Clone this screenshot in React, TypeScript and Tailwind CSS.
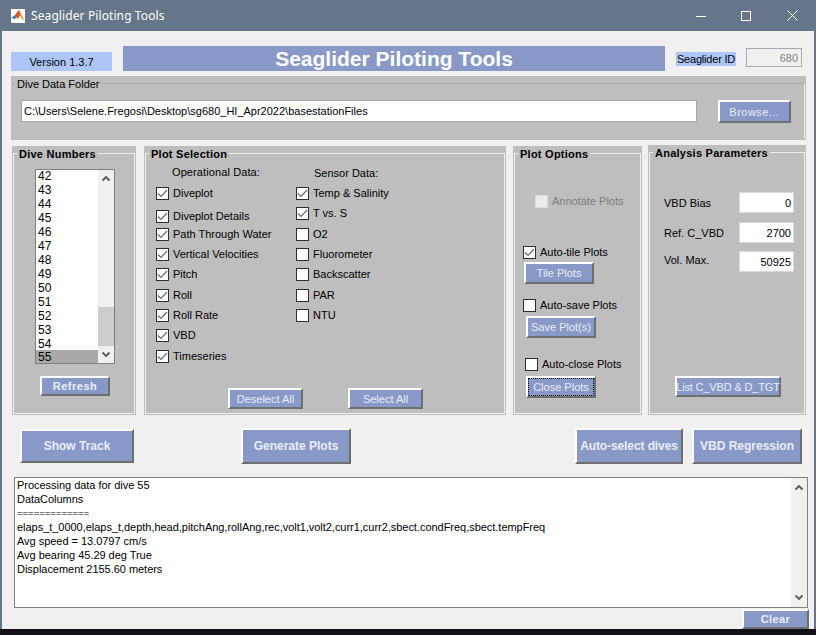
import type { ReactNode } from "react";

const diveNumbers = [42, 43, 44, 45, 46, 47, 48, 49, 50, 51, 52, 53, 54, 55];

const logLines = [
  "Processing data for dive 55",
  "DataColumns",
  "=============",
  "elaps_t_0000,elaps_t,depth,head,pitchAng,rollAng,rec,volt1,volt2,curr1,curr2,sbect.condFreq,sbect.tempFreq",
  "Avg speed = 13.0797 cm/s",
  "Avg bearing 45.29 deg True",
  "Displacement 2155.60 meters",
];

const operational = [
  { label: "Diveplot", row: "h-[23px]" },
  { label: "Diveplot Details", row: "h-[18px]" },
  { label: "Path Through Water", row: "h-[20px]" },
  { label: "Vertical Velocities", row: "h-[20px]" },
  { label: "Pitch", row: "h-[21px]" },
  { label: "Roll", row: "h-[20px]" },
  { label: "Roll Rate", row: "h-[20px]" },
  { label: "VBD", row: "h-[21px]" },
  { label: "Timeseries", row: "h-[14px]" },
];

const sensors = [
  { label: "Temp & Salinity", checked: true, row: "h-[20px]" },
  { label: "T vs. S", checked: true, row: "h-[21px]" },
  { label: "O2", checked: false, row: "h-[20px]" },
  { label: "Fluorometer", checked: false, row: "h-[20px]" },
  { label: "Backscatter", checked: false, row: "h-[21px]" },
  { label: "PAR", checked: false, row: "h-[20px]" },
  { label: "NTU", checked: false, row: "h-[14px]" },
];

function Btn({ children, className = "" }: { children: ReactNode; className?: string }) {
  return (
    <div
      className={
        "flex shrink-0 items-center justify-center border-2 border-t-white border-l-white border-r-[#6e6e6e] border-b-[#6e6e6e] bg-[#8899c8] text-[#e9eef8] " +
        className
      }
    >
      {children}
    </div>
  );
}

function Check({ label, checked = false, disabled = false }: { label: string; checked?: boolean; disabled?: boolean }) {
  return (
    <div className={"flex h-[14px] items-center " + (disabled ? "text-[#7d7d7d]" : "text-black")}>
      <div
        className={
          "flex h-[13px] w-[13px] shrink-0 items-center justify-center border " +
          (disabled ? "border-[#dcdcdc] bg-[#ececec]" : "border-[#2e2e2e] bg-white")
        }
      >
        {checked && (
          <svg width="11" height="11" viewBox="0 0 11 11" fill="none">
            <path d="M1 5.5 L4 8.5 L10 2" stroke="#6a6a6a" strokeWidth="1.2" />
          </svg>
        )}
      </div>
      <span className="ml-[4px] whitespace-nowrap">{label}</span>
    </div>
  );
}

function Panel({
  title,
  className = "",
  frame = "border-[#efefef]",
  bold = true,
  children,
}: {
  title: string;
  className?: string;
  frame?: string;
  bold?: boolean;
  children: ReactNode;
}) {
  return (
    <div className={"relative shrink-0 bg-[#bebebe] " + className}>
      <div className={"pointer-events-none absolute inset-x-[1px] top-[7px] bottom-[1px] border " + frame} />
      <div
        className={
          "absolute top-[1px] bg-[#bebebe] px-[2px] leading-[14px] text-black " +
          (bold ? "left-[5px] font-bold tracking-[0.25px]" : "left-[4px]")
        }
      >
        {title}
      </div>
      {/* sits above the frame so the controls are not crossed by it */}
      <div className="relative">{children}</div>
    </div>
  );
}

function Chevron({ up = false }: { up?: boolean }) {
  return (
    <svg width="10" height="7" viewBox="0 0 10 7" fill="none">
      <path d={up ? "M1.5 5.5 L5 2 L8.5 5.5" : "M1.5 1.5 L5 5 L8.5 1.5"} stroke="#5a5a5a" strokeWidth="1.8" />
    </svg>
  );
}

function NumField({ value }: { value: string }) {
  return (
    <div className="ml-auto flex h-[21px] w-[55px] items-center justify-end border border-[#d8d8d8] bg-white pr-[2px] text-black">
      {value}
    </div>
  );
}

function MatlabLogo() {
  return (
    <div className="flex h-[14px] w-[14px] items-center justify-center bg-white">
      <svg width="14" height="14" viewBox="0 0 14 14">
        <path d="M0.5 8.5 L4 6 L6 7.5 L3.5 10.5 Z" fill="#3f7fc0" />
        <path d="M4 6 L8 1 L10 5 L6.5 10 Z" fill="#d9541e" />
        <path d="M8 1 L10 5 L13.5 11.5 L10.5 9.5 L8.5 6 Z" fill="#e8912d" />
      </svg>
    </div>
  );
}

export default function App() {
  return (
    <div
      className="flex h-[635px] w-[816px] flex-col overflow-hidden bg-[#667589] text-[11px] leading-[14px] text-black"
      style={{ fontFamily: '"Liberation Sans", Arial, sans-serif' }}
    >
      <div className="flex h-[31px] shrink-0 items-center pl-[11px] text-white">
        <MatlabLogo />
        <span
          className="ml-[6px] w-[122px] whitespace-nowrap text-[12px] tracking-[0.1px]"
          style={{ fontFamily: '"Noto Sans", sans-serif' }}
        >
          Seaglider Piloting Tools
        </span>
        <svg className="ml-[543px]" width="10" height="10" viewBox="0 0 10 10" fill="none">
          <path d="M0 5.5 H10" stroke="#fff" />
        </svg>
        <svg className="ml-[35px]" width="10" height="10" viewBox="0 0 10 10" fill="none">
          <rect x="0.5" y="0.5" width="9" height="9" stroke="#fff" />
        </svg>
        <svg className="ml-[36px]" width="11" height="11" viewBox="0 0 11 11" fill="none">
          <path d="M0.5 0.5 L10.5 10.5 M10.5 0.5 L0.5 10.5" stroke="#fff" />
        </svg>
      </div>

      <div className="mx-[2px] flex h-[598px] shrink-0 flex-col bg-[#f0f0f0]">
        <div className="mt-[15px] flex h-[25px] shrink-0 items-start">
          <div className="ml-[9px] mt-[6px] flex h-[19px] w-[101px] items-center justify-center bg-[#adc6f7]">
            Version 1.3.7
          </div>
          <div className="ml-[11px] flex h-[25px] w-[542px] items-center justify-center bg-[#8899c8] text-[21px] font-bold text-white">
            Seaglider Piloting Tools
          </div>
          <div className="ml-[11px] mt-[6px] flex h-[14px] w-[60px] items-center justify-center whitespace-nowrap bg-[#adc6f7] tracking-[-0.2px]">
            Seaglider ID
          </div>
          <div className="ml-[10px] mt-[2px] flex h-[19px] w-[56px] items-center justify-end border border-[#a9a9b0] pr-[3px] text-[#808080]">
            680
          </div>
        </div>

        <Panel
          title="Dive Data Folder"
          bold={false}
          frame="border-transparent border-t-[#a8a8a8] border-r-[#efefef]"
          className="ml-[9px] mt-[5px] h-[64px] w-[795px]"
        >
          <div className="flex pt-[24px]">
            <div className="ml-[10px] flex h-[22px] w-[676px] items-center border border-[#a8a8a8] bg-white pl-[2px]">
              C:\Users\Selene.Fregosi\Desktop\sg680_HI_Apr2022\basestationFiles
            </div>
            <Btn className="ml-[21px] h-[23px] w-[73px] tracking-[0.5px]">Browse...</Btn>
          </div>
        </Panel>

        <div className="mt-[6px] flex h-[269px] shrink-0 pl-[10px]">
          <Panel title="Dive Numbers" className="h-[269px] w-[124px]">
            <div className="ml-[23px] flex h-[195px] w-[80px] translate-y-[23px] border border-[#7f7f7f] bg-white">
              <div className="h-full flex-1 overflow-hidden">
                <div className="-mt-[1px]">
                  {diveNumbers.map((n) => (
                    <div key={n} className={"h-[14px] pl-[2px] text-[12px] " + (n === 55 ? "-mt-[1px] bg-[#a9a9a9]" : "")}>
                      {n}
                    </div>
                  ))}
                </div>
              </div>
              <div className="flex w-[16px] flex-col bg-[#f0f0f0]">
                <div className="flex h-[16px] items-center justify-center">
                  <Chevron up />
                </div>
                <div className="flex flex-1 flex-col justify-end">
                  <div className="h-[39px] bg-[#cdcdcd]" />
                </div>
                <div className="flex h-[17px] items-center justify-center">
                  <Chevron />
                </div>
              </div>
            </div>
            <Btn className="ml-[28px] mt-[35px] h-[20px] w-[70px] font-bold tracking-[0.5px]">Refresh</Btn>
          </Panel>

          <Panel title="Plot Selection" className="ml-[8px] h-[269px] w-[362px]">
            <div className="flex h-[242px]">
              <div className="ml-[12px] w-[140px] pt-[19px]">
                <div className="ml-[16px] tracking-[0.1px]">Operational Data:</div>
                <div className="mt-[7px]">
                  {operational.map((o) => (
                    <div key={o.label} className={o.row}>
                      <Check label={o.label} checked />
                    </div>
                  ))}
                </div>
              </div>
              <div className="pt-[20px]">
                <div className="ml-[18px]">Sensor Data:</div>
                <div className="mt-[6px]">
                  {sensors.map((s) => (
                    <div key={s.label} className={s.row}>
                      <Check label={s.label} checked={s.checked} />
                    </div>
                  ))}
                </div>
              </div>
            </div>
            <div className="flex">
              <Btn className="ml-[84px] h-[21px] w-[75px]">Deselect All</Btn>
              <Btn className="ml-[45px] h-[21px] w-[75px]">Select All</Btn>
            </div>
          </Panel>

          <Panel title="Plot Options" className="ml-[7px] h-[269px] w-[129px]">
            <div className="ml-[22px] pt-[48px]">
              <Check label="Annotate Plots" disabled />
            </div>
            <div className="ml-[10px] mt-[37px]">
              <Check label="Auto-tile Plots" checked />
            </div>
            <Btn className="ml-[11px] mt-[3px] h-[22px] w-[70px]">Tile Plots</Btn>
            <div className="ml-[10px] mt-[14px]">
              <Check label="Auto-save Plots" />
            </div>
            <Btn className="ml-[13px] mt-[4px] h-[22px] w-[70px]">Save Plot(s)</Btn>
            <div className="ml-[12px] mt-[19px]">
              <Check label="Auto-close Plots" />
            </div>
            <Btn className="ml-[13px] mt-[5px] h-[22px] w-[70px] outline-1 -outline-offset-3 outline-black outline-dotted">
              Close Plots
            </Btn>
          </Panel>

          <Panel title="Analysis Parameters" className="ml-[6px] -mt-[1px] h-[270px] w-[158px]">
            <div className="pt-[47px]">
              <div className="ml-[16px] mr-[12px] flex items-center">
                <span>VBD Bias</span>
                <NumField value="0" />
              </div>
              <div className="ml-[16px] mr-[12px] mt-[9px] flex items-center">
                <span>Ref. C_VBD</span>
                <NumField value="2700" />
              </div>
              <div className="ml-[16px] mr-[12px] mt-[8px] flex items-center">
                <span className="pb-[4px]">Vol. Max.</span>
                <NumField value="50925" />
              </div>
            </div>
            <Btn className="ml-[27px] mt-[104px] h-[21px] w-[106px] whitespace-nowrap tracking-[-0.15px]">
              List C_VBD &amp; D_TGT
            </Btn>
          </Panel>
        </div>

        <div className="mt-[13px] flex h-[36px] shrink-0 items-start text-[12px] font-bold">
          <Btn className="ml-[18px] mt-[1px] h-[34px] w-[114px]">Show Track</Btn>
          <Btn className="ml-[107px] h-[36px] w-[110px]">Generate Plots</Btn>
          <Btn className="ml-[224px] h-[36px] w-[108px] tracking-[-0.1px]">Auto-select dives</Btn>
          <Btn className="ml-[9px] h-[36px] w-[110px]">VBD Regression</Btn>
        </div>

        <div className="ml-[12px] mt-[13px] flex h-[131px] w-[794px] shrink-0 border border-[#808080] bg-white">
          <div className="flex-1 pl-[2px]">
            {logLines.map((line) => (
              <div
                key={line}
                className={"h-[14px] whitespace-nowrap " + (line.startsWith("=") ? "text-[9.5px]" : "tracking-[-0.03px]")}
              >
                {line}
              </div>
            ))}
          </div>
          <div className="flex w-[16px] flex-col justify-between bg-[#f0f0f0] py-[6px]">
            <div className="flex justify-center">
              <Chevron up />
            </div>
            <div className="flex justify-center">
              <Chevron />
            </div>
          </div>
        </div>

        <Btn className="ml-[740px] mt-[1px] h-[20px] w-[67px] font-bold tracking-[0.4px]">Clear</Btn>
      </div>

      <div className="h-[6px] shrink-0 bg-[#0f1115]" />
    </div>
  );
}
